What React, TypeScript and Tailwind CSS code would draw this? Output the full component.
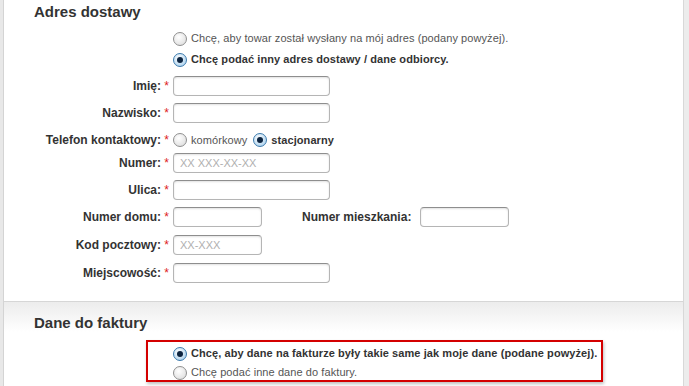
import React from "react";

const font = { fontFamily: '"Liberation Sans", Arial, sans-serif' };

function Radio({ checked }: { checked?: boolean }) {
  return (
    <span
      className={
        "inline-flex items-center justify-center w-[14px] h-[14px] rounded-full border shrink-0 " +
        (checked
          ? "border-[#3d7bad] bg-[radial-gradient(circle_at_40%_35%,#ffffff,#b8d8f0_70%,#7fb1dc)]"
          : "border-[#8f8f8f] bg-[radial-gradient(circle_at_40%_35%,#ffffff,#e4e4e4_70%,#cfcfcf)]")
      }
    >
      {checked && <span className="w-[6px] h-[6px] rounded-full bg-[#0c2440]" />}
    </span>
  );
}

function Input({ w, placeholder }: { w: number; placeholder?: string }) {
  return (
    <div
      className="h-[20px] rounded-[4px] border border-[#b5b5b5] border-t-[#8e8e8e] bg-white shadow-[inset_0_1px_2px_rgba(0,0,0,0.12)] flex items-center pl-[6px] text-[11px] text-[#b0b0b0]"
      style={{ width: w }}
    >
      {placeholder}
    </div>
  );
}

function Label({ text }: { text: string }) {
  return (
    <div className="w-[169px] shrink-0 text-right pr-[4px] text-[12px] font-bold text-[#333]">
      {text} <span className="text-[#d22] font-normal">*</span>
    </div>
  );
}

function Row({ mt, label, children }: { mt: number; label: string; children: React.ReactNode }) {
  return (
    <div className="flex items-center h-[20px]" style={{ marginTop: mt }}>
      <Label text={label} />
      {children}
    </div>
  );
}

export default function App() {
  return (
    <div className="w-[689px] h-[386px] overflow-hidden flex bg-white" style={font}>
      <div className="w-[4px] bg-[#e8e8e8] border-r border-[#d4d4d4]" />
      <div className="flex-1 flex flex-col">
        <div className="h-[302px] bg-white border-b border-[#d6d6d6]">
          <div className="pl-[30px] pt-[1px] text-[15px] font-bold text-[#333] h-[28px]">Adres dostawy</div>
          <div className="pl-[169px] tracking-[0.08px]">
            <div className="flex items-center gap-[4px] h-[21px] text-[11px] text-[#555]">
              <Radio /> Chcę, aby towar został wysłany na mój adres (podany powyżej).
            </div>
            <div className="flex items-center gap-[4px] h-[21px] text-[11px] font-bold text-[#333]">
              <Radio checked /> Chcę podać inny adres dostawy / dane odbiorcy.
            </div>
          </div>
          <div className="flex flex-col">
            <Row mt={6} label="Imię:">
              <Input w={157} />
            </Row>
            <Row mt={7} label="Nazwisko:">
              <Input w={157} />
            </Row>
            <Row mt={7} label="Telefon kontaktowy:">
              <div className="flex items-center text-[11px] tracking-[0.08px]">
                <Radio />
                <span className="ml-[4px] text-[#555]">komórkowy</span>
                <span className="ml-[6px] flex"><Radio checked /></span>
                <span className="ml-[4px] font-bold text-[#333]">stacjonarny</span>
              </div>
            </Row>
            <Row mt={3} label="Numer:">
              <Input w={157} placeholder="XX XXX-XX-XX" />
            </Row>
            <Row mt={7} label="Ulica:">
              <Input w={157} />
            </Row>
            <Row mt={7} label="Numer domu:">
              <Input w={89} />
              <div className="ml-[40px] text-[12px] font-bold text-[#333]">Numer mieszkania:</div>
              <div className="ml-[9px]">
                <Input w={89} />
              </div>
            </Row>
            <Row mt={8} label="Kod pocztowy:">
              <Input w={89} placeholder="XX-XXX" />
            </Row>
            <Row mt={8} label="Miejscowość:">
              <Input w={157} />
            </Row>
          </div>
        </div>
        <div className="flex-1 bg-[linear-gradient(to_bottom,#ececec,#ffffff_30px)]">
          <div className="pl-[30px] pt-[10px] h-[38px] text-[15px] font-bold text-[#333]">Dane do faktury</div>
          <div className="ml-[142px] w-[457px] h-[42px] border-2 border-[#d40000] shadow-[1px_2px_3px_rgba(0,0,0,0.25)] pl-[25px] pt-[2px] bg-white tracking-[0.08px]">
            <div className="flex items-center gap-[4px] h-[19px] text-[11px] font-bold text-[#333]">
              <Radio checked /> Chcę, aby dane na fakturze były takie same jak moje dane (podane powyżej).
            </div>
            <div className="flex items-center gap-[4px] h-[19px] text-[11px] text-[#555]">
              <Radio /> Chcę podać inne dane do faktury.
            </div>
          </div>
        </div>
      </div>
      <div className="w-[6px] bg-[#ececec] border-l border-[#d8d8d8]" />
    </div>
  );
}
